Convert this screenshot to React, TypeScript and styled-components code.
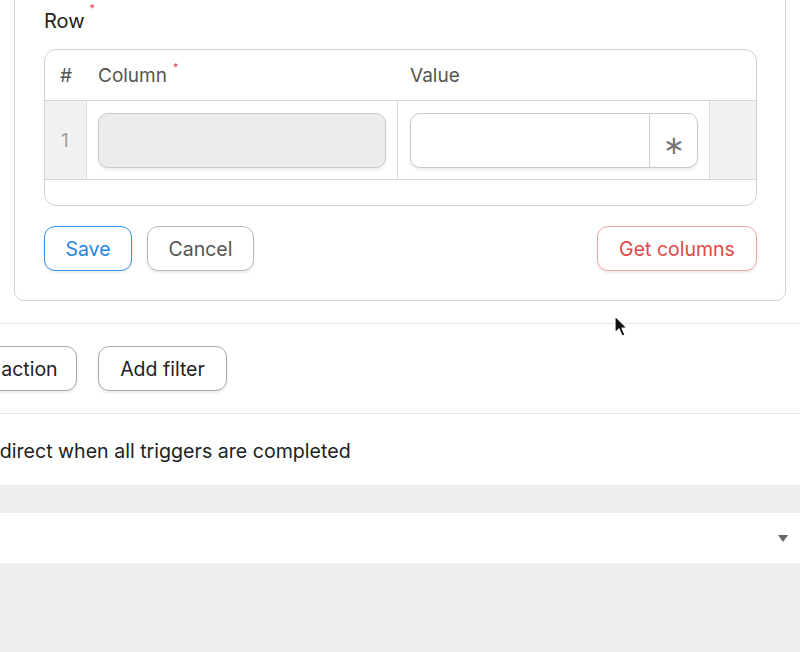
import React from "react";
import styled, { createGlobalStyle } from "styled-components";

const GlobalStyle = createGlobalStyle`
  html, body {
    margin: 0;
    padding: 0;
    background: #fff;
    overflow: hidden;
  }
  body {
    font-family: Inter, "Noto Sans", "Liberation Sans", sans-serif;
    color: #222;
  }
`;

/* ---------------- Page ---------------- */

const Page = styled.div`
  position: relative;
  width: 800px;
  height: 652px;
  overflow: hidden;
  display: flex;
  flex-direction: column;
`;

/* ---------------- Row editor card ---------------- */

const Card = styled.div`
  margin: -20px 14px 0 14px;
  border: 1px solid #d2d2d2;
  border-radius: 10px;
  padding: 0 28px 29px 29px;
`;

const FieldLabel = styled.div`
  font-size: 20px;
  line-height: 24px;
  margin-top: 28px;
  color: #222;
  display: flex;
  align-items: flex-start;
`;

const Req = styled.span`
  color: #e5484d;
  font-size: 11px;
  line-height: 11px;
  margin-left: 5px;
  margin-top: -6px;
`;

const Table = styled.div`
  margin-top: 16px;
  border: 1px solid #d0d0d0;
  border-radius: 12px;
  overflow: hidden;
`;

const Grid = styled.div`
  display: grid;
  grid-template-columns: 42px 311px 312px 1fr;
`;

const HeadCell = styled.div<{ $pad?: number }>`
  height: 50px;
  display: flex;
  align-items: center;
  padding-left: ${(p) => p.$pad ?? 11}px;
  font-size: 19px;
  color: #555;
  border-bottom: 1px solid #d6d6d6;
`;

const HeadReq = styled(Req)`
  margin-top: -16px;
  margin-left: 6px;
`;

const BodyCell = styled.div<{ $shade?: boolean; $last?: boolean; $padLeft?: number }>`
  height: 79px;
  display: flex;
  align-items: center;
  background: ${(p) => (p.$shade ? "#f1f1f1" : "#fff")};
  border-right: ${(p) => (p.$last ? "none" : "1px solid #dcdcdc")};
  border-bottom: 1px solid #d6d6d6;
  box-sizing: border-box;
  padding: 0 11px 0 ${(p) => p.$padLeft ?? 11}px;
`;

const RowNum = styled.span`
  font-size: 19px;
  color: #a0a0a0;
  margin-left: 5px;
`;

const ColumnInput = styled.div`
  flex: 1;
  height: 53px;
  border: 1px solid #c9c9c9;
  border-radius: 10px;
  background: #ececec;
  box-shadow: 0 2px 3px rgba(0, 0, 0, 0.08);
`;

const ValueGroup = styled.div`
  flex: 1;
  height: 53px;
  display: flex;
  border: 1px solid #c9c9c9;
  border-radius: 10px;
  background: #fff;
  overflow: hidden;
  box-shadow: 0 2px 3px rgba(0, 0, 0, 0.08);
`;

const ValueField = styled.div`
  flex: 1;
`;

const StarButton = styled.div`
  width: 48px;
  border-left: 1px solid #cfcfcf;
  display: flex;
  align-items: center;
  justify-content: center;
  color: #777;
  font-size: 26px;
  padding-top: 8px;
  box-sizing: border-box;
`;

const TableFooter = styled.div`
  height: 25px;
`;

/* ---------------- Buttons ---------------- */

const ButtonRow = styled.div`
  display: flex;
  align-items: center;
  gap: 15px;
  margin-top: 20px;
`;

const Spacer = styled.div`
  flex: 1;
`;

const tones = {
  blue: { border: "#3a93e6", color: "#2586df" },
  gray: { border: "#b9b9b9", color: "#555" },
  red: { border: "#f2a3a3", color: "#e0484a" },
  dark: { border: "#a9a9a9", color: "#222" },
};

const Button = styled.button<{ $tone: keyof typeof tones; $w: number }>`
  height: 45px;
  width: ${(p) => p.$w}px;
  flex: none;
  border-radius: 11px;
  border: 1px solid ${(p) => tones[p.$tone].border};
  color: ${(p) => tones[p.$tone].color};
  background: #fff;
  font-family: inherit;
  font-size: 19.5px;
  box-shadow: 0 2px 3px rgba(0, 0, 0, 0.08);
  padding: 0;
  white-space: nowrap;
  cursor: pointer;
`;

/* ---------------- Lower sections ---------------- */

const Section = styled.div<{ $h: number; $top?: boolean }>`
  height: ${(p) => p.$h}px;
  flex: none;
  display: flex;
  align-items: center;
  border-top: ${(p) => (p.$top ? "1px solid #e7e7e7" : "none")};
  box-sizing: border-box;
`;

const FilterBar = styled.div`
  display: flex;
  gap: 21px;
  margin-left: -61px;
`;

const Note = styled.div`
  font-size: 19.6px;
  color: #222;
  margin-left: -24px;
  margin-top: 3px;
  white-space: nowrap;
`;

const GrayBand = styled.div<{ $h?: number }>`
  background: #ededed;
  height: ${(p) => (p.$h ? `${p.$h}px` : "auto")};
  flex: ${(p) => (p.$h ? "none" : "1")};
`;

const SelectBar = styled.div`
  height: 50px;
  flex: none;
  display: flex;
  align-items: center;
  justify-content: flex-end;
  padding-right: 12px;
`;

const Caret = styled.div`
  width: 0;
  height: 0;
  border-left: 5px solid transparent;
  border-right: 5px solid transparent;
  border-top: 7px solid #666;
`;

const Pointer = styled.svg`
  position: absolute;
  left: 613px;
  top: 315px;
`;

export default function App() {
  return (
    <>
      <GlobalStyle />
      <Page>
        <Card>
          <FieldLabel>
            Row<Req>*</Req>
          </FieldLabel>
          <Table>
            <Grid>
              <HeadCell $pad={15}>#</HeadCell>
              <HeadCell>
                Column<HeadReq>*</HeadReq>
              </HeadCell>
              <HeadCell $pad={12}>Value</HeadCell>
              <HeadCell />

              <BodyCell $shade>
                <RowNum>1</RowNum>
              </BodyCell>
              <BodyCell>
                <ColumnInput />
              </BodyCell>
              <BodyCell $padLeft={12}>
                <ValueGroup>
                  <ValueField />
                  <StarButton>∗</StarButton>
                </ValueGroup>
              </BodyCell>
              <BodyCell $shade $last />
            </Grid>
            <TableFooter />
          </Table>
          <ButtonRow>
            <Button $tone="blue" $w={88}>
              Save
            </Button>
            <Button $tone="gray" $w={107}>
              Cancel
            </Button>
            <Spacer />
            <Button $tone="red" $w={160}>
              Get columns
            </Button>
          </ButtonRow>
        </Card>

        <Section $h={22} />
        <Section $h={90} $top>
          <FilterBar>
            <Button $tone="dark" $w={138}>
              Add action
            </Button>
            <Button $tone="dark" $w={129}>
              Add filter
            </Button>
          </FilterBar>
        </Section>
        <Section $h={72} $top>
          <Note>Redirect when all triggers are completed</Note>
        </Section>
        <GrayBand $h={28} />
        <SelectBar>
          <Caret />
        </SelectBar>
        <GrayBand />

        <Pointer width="16" height="24" viewBox="0 0 16 24">
          <path
            d="M2 1 L2 18 L6 14 L9 21 L12 20 L9 13 L14 13 Z"
            fill="#111"
            stroke="#fff"
            strokeWidth="1.2"
            strokeLinejoin="round"
          />
        </Pointer>
      </Page>
    </>
  );
}
